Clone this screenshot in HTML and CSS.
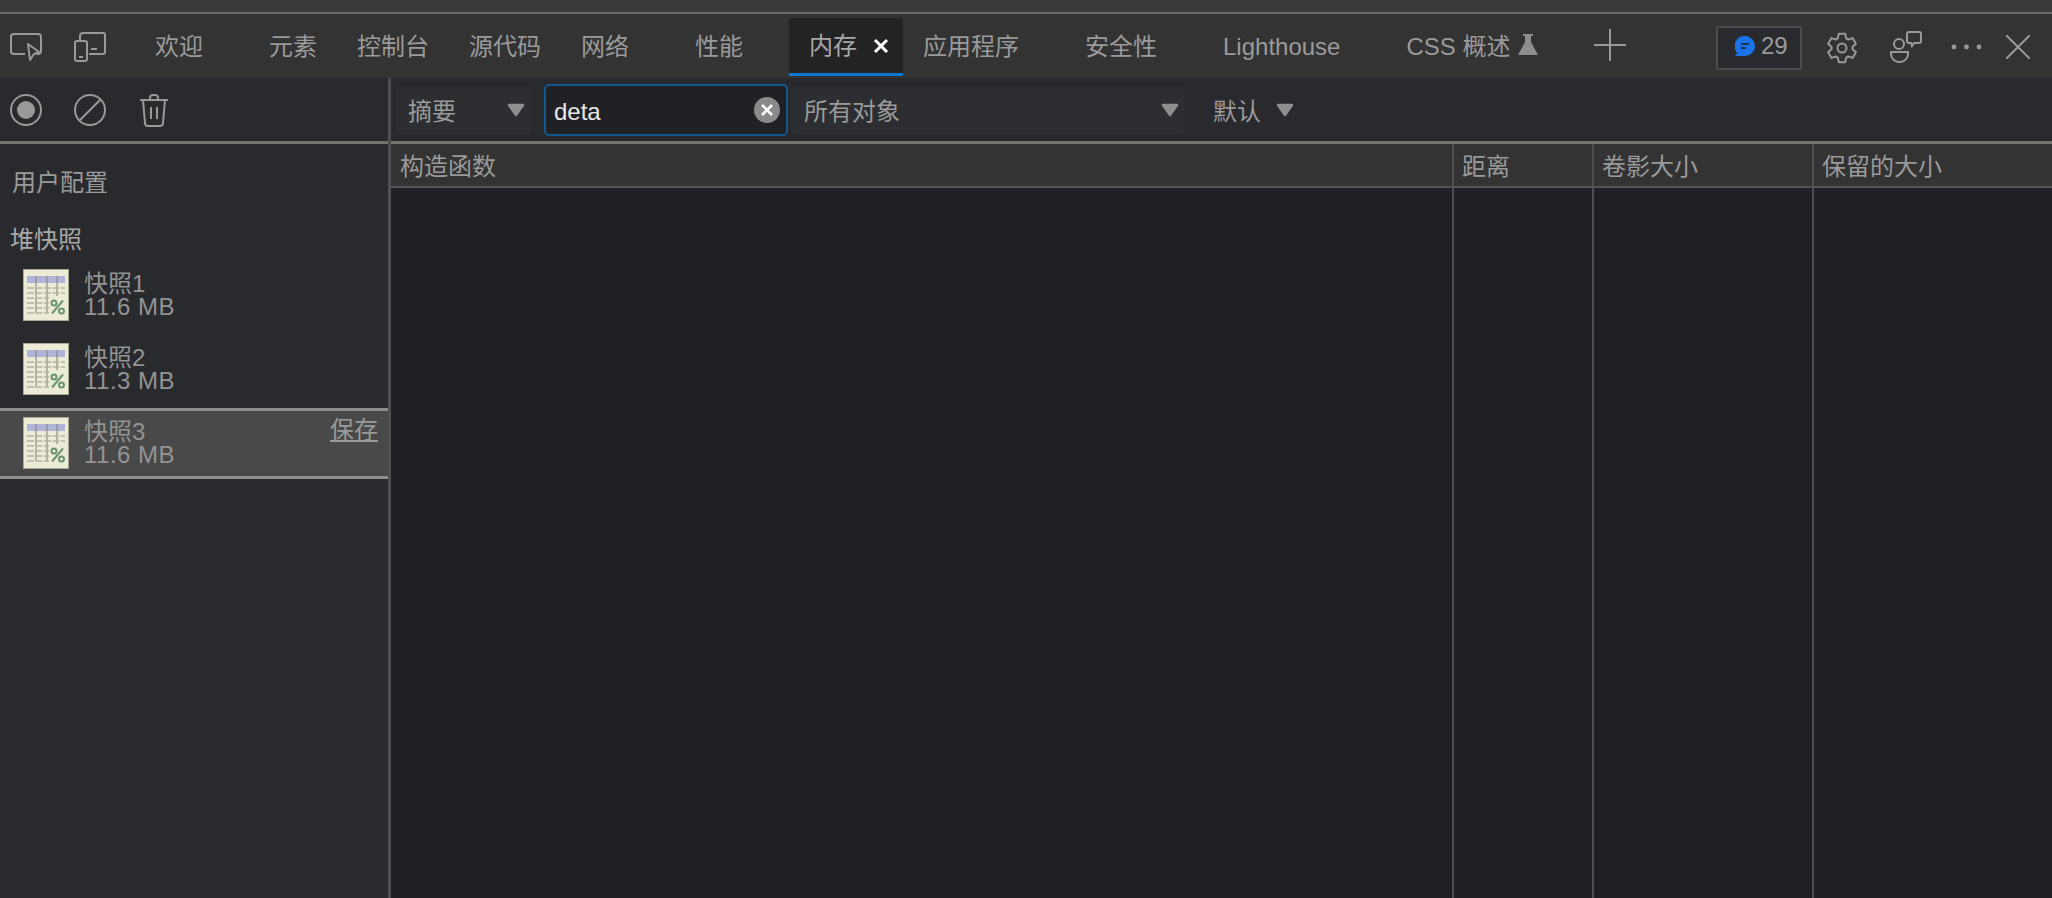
FILE: index.html
```html
<!DOCTYPE html>
<html lang="zh">
<head>
<meta charset="utf-8">
<title>内存</title>
<link rel="stylesheet" href="styles.css">
</head>
<body>
<svg class="defs" width="0" height="0" aria-hidden="true">
  <symbol id="sheet" viewBox="0 0 46 52">
    <rect x="0.5" y="0.5" width="45" height="51" fill="#ecebd6" stroke="#a9a996"/>
    <rect x="4" y="7" width="38" height="7" fill="#b0b4d8"/>
    <g stroke="#8f8f82" stroke-width="1.5" opacity=".6">
      <path d="M4 19h38M4 24h38M4 29h22M4 34h22M4 39h22M4 44h22" stroke-dasharray="7 1.5"/>
      <path d="M13 7v37M24 7v37M34 7v20" stroke-width="2"/>
    </g>
    <g fill="none" stroke="#6a9470" stroke-width="2">
      <path d="M40 31.500L29 44.500"/>
      <circle cx="31" cy="34" r="2.500"/>
      <circle cx="38.500" cy="42" r="2.500"/>
    </g>
  </symbol>
  <symbol id="tri" viewBox="0 0 18 14">
    <path d="M2 2h14L9 12z" fill="#8e8e8e" stroke="#8e8e8e" stroke-width="2.5" stroke-linejoin="round"/>
  </symbol>
</svg>
<div class="window-edge"></div>
<header class="tabbar">
  <button class="tool">
    <svg width="32" height="28" viewBox="0 0 32 28" fill="none" stroke="#999" stroke-width="2"><path d="M15 21H4a3 3 0 0 1-3-3V4a3 3 0 0 1 3-3h24a3 3 0 0 1 3 3v14a3 3 0 0 1-3 3h-2"/><path d="M18 11l11 8-5 2-4 6z" fill="#333" stroke-linejoin="round"/></svg>
  </button>
  <button class="tool">
    <svg width="32" height="30" viewBox="0 0 32 30" fill="none" stroke="#999" stroke-width="2"><path d="M6 8V4a3 3 0 0 1 3-3h20a2 2 0 0 1 2 2v17a2 2 0 0 1-2 2h-14"/><rect x="1" y="9" width="12" height="20" rx="2"/><path d="M5 25h4M17 17h6" stroke-width="2"/></svg>
  </button>
  <nav class="tabs">
    <span class="tab tab-roomy">欢迎</span>
    <span class="tab">元素</span>
    <span class="tab">控制台</span>
    <span class="tab">源代码</span>
    <span class="tab tab-roomy">网络</span>
    <span class="tab tab-roomy">性能</span>
    <span class="tab tab-active">内存<svg class="tab-close" width="16" height="16" viewBox="0 0 16 16" stroke="#fff" stroke-width="3"><path d="M2 2l12 12M14 2L2 14"/></svg></span>
    <span class="tab tab-roomy">应用程序</span>
    <span class="tab tab-roomy">安全性</span>
    <span class="tab tab-roomy">Lighthouse</span>
    <span class="tab tab-css">CSS 概述<svg class="flask" width="20" height="22" viewBox="0 0 20 22"><path d="M5 1h10v2h-2v6l6 11a1 1 0 0 1-1 2H2a1 1 0 0 1-1-2L7 9V3H5z" fill="#8e8e8e"/></svg></span>
    <svg class="plus" width="32" height="32" viewBox="0 0 32 32" stroke="#999" stroke-width="2"><path d="M0 16h32M16 0v32"/></svg>
  </nav>
  <div class="actions">
    <div class="badge">
      <svg width="20" height="20" viewBox="0 0 20 20"><path d="M10 0a10 10 0 0 1 0 20H0l2.4-3A10 10 0 0 1 10 0z" fill="#1a73e8"/><path d="M6 8h8M6 12h5" stroke="#202124" stroke-width="1.6"/></svg>
      <span>29</span>
    </div>
    <svg class="act-gear" width="32" height="32" viewBox="0 0 32 32" fill="none" stroke="#999" stroke-width="2" stroke-linejoin="round"><path d="M11.73 6.41L12.74 1.87H19.26L20.27 6.41L22.17 7.51L26.6 6.11L29.87 11.76L26.44 14.9V17.1L29.87 20.24L26.6 25.89L22.17 24.49L20.27 25.59L19.26 30.13H12.74L11.73 25.59L9.83 24.49L5.4 25.89L2.13 20.24L5.56 17.1V14.9L2.13 11.76L5.4 6.11L9.83 7.51Z"/><circle cx="16" cy="16" r="4.5"/></svg>
    <svg class="act-feedback" width="32" height="32" viewBox="0 0 32 32" fill="none" stroke="#999" stroke-width="2"><circle cx="9" cy="13" r="5"/><path d="M1 21h17v2a8 8 0 0 1-8 8H9a8 8 0 0 1-8-8z"/><path d="M19 1h10a2 2 0 0 1 2 2v7a2 2 0 0 1-2 2h-5l-2 3-1-3h-2a2 2 0 0 1-2-2V3a2 2 0 0 1 2-2z"/></svg>
    <svg class="act-dots" width="31" height="6" viewBox="0 0 31 6" fill="#999"><circle cx="3" cy="3" r="2.4"/><circle cx="15.5" cy="3" r="2.4"/><circle cx="28" cy="3" r="2.4"/></svg>
    <svg class="act-close" width="24" height="24" viewBox="0 0 24 24" stroke="#999" stroke-width="2"><path d="M0 0l24 24M24 0L0 24"/></svg>
  </div>
</header>
<div class="workspace">
  <aside class="sidebar">
    <div class="side-toolbar">
      <svg width="32" height="32" viewBox="0 0 32 32" fill="none" stroke="#999" stroke-width="2"><circle cx="16" cy="16" r="15"/><circle cx="16" cy="16" r="9" fill="#999" stroke="none"/></svg>
      <svg width="32" height="32" viewBox="0 0 32 32" fill="none" stroke="#999" stroke-width="2"><circle cx="16" cy="16" r="15"/><path d="M5.5 26.5l21-21"/></svg>
      <svg class="trash" width="28" height="33" viewBox="0 0 28 33" fill="none" stroke="#999" stroke-width="2"><path d="M0 6h28M10 6V4a3 3 0 0 1 3-3h2a3 3 0 0 1 3 3v2M3 6l2 23a3 3 0 0 0 3 3h12a3 3 0 0 0 3-3l2-23M11 13v12M17 13v12"/></svg>
    </div>
    <div class="side-title">用户配置</div>
    <div class="side-group">堆快照</div>
    <div class="snapshot">
      <svg class="sheet"><use href="#sheet"/></svg>
      <div class="snap-text"><div>快照1</div><div class="snap-size">11.6 MB</div></div>
    </div>
    <div class="snapshot">
      <svg class="sheet"><use href="#sheet"/></svg>
      <div class="snap-text"><div>快照2</div><div class="snap-size">11.3 MB</div></div>
    </div>
    <div class="snapshot snapshot-selected">
      <svg class="sheet"><use href="#sheet"/></svg>
      <div class="snap-text"><div>快照3</div><div class="snap-size">11.6 MB</div></div>
      <span class="snap-save">保存</span>
    </div>
  </aside>
  <main class="main">
    <div class="filters">
      <div class="select select-view"><span class="field-text">摘要</span><svg class="tri"><use href="#tri"/></svg></div>
      <div class="search"><span class="field-text">deta</span>
        <svg class="search-clear" width="26" height="26" viewBox="0 0 26 26"><circle cx="13" cy="13" r="13" fill="#8a8a8a"/><path d="M8 8l10 10M18 8L8 18" stroke="#fff" stroke-width="2.6"/></svg>
      </div>
      <div class="select select-objects"><span class="field-text">所有对象</span><svg class="tri"><use href="#tri"/></svg></div>
      <div class="select select-order"><span class="field-text">默认</span><svg class="tri"><use href="#tri"/></svg></div>
    </div>
    <div class="grid">
      <div class="grid-row grid-head">
        <div class="cell">构造函数</div>
        <div class="cell">距离</div>
        <div class="cell">卷影大小</div>
        <div class="cell">保留的大小</div>
      </div>
      <div class="grid-row grid-body">
        <div class="cell"></div>
        <div class="cell"></div>
        <div class="cell"></div>
        <div class="cell"></div>
      </div>
    </div>
  </main>
</div>
</body>
</html>
```

FILE: styles.css
```css
* { box-sizing: border-box; }
html, body { height: 100%; }
body {
  margin: 0;
  width: 2052px;
  height: 898px;
  overflow: hidden;
  display: flex;
  flex-direction: column;
  background: #292a2d;
  color: #9a9a9a;
  font-family: "Liberation Sans", "Noto Sans CJK SC", sans-serif;
  font-size: 24px;
  line-height: 28px;
}
.defs { position: absolute; }
svg { display: block; flex: none; }

.window-edge {
  height: 14px;
  flex: none;
  background: #3a3a3a;
  border-bottom: 2px solid #6c6c6c;
}

.tabbar {
  height: 64px;
  flex: none;
  display: flex;
  align-items: center;
  padding-left: 10px;
  background: #333333;
}
.tool {
  width: 32px;
  height: 30px;
  margin-right: 32px;
  padding: 0;
  border: 0;
  background: none;
  position: relative;
  top: 1px;
}
.tabs {
  display: flex;
  align-items: stretch;
  height: 100%;
  margin-left: -3px;
}
.tab {
  display: flex;
  align-items: center;
  padding: 2px 20px 0;
  white-space: nowrap;
}
.tab-roomy { padding-right: 46px; }
.tab-active {
  height: 58px;
  margin-top: 4px;
  padding: 0 14px 0 20px;
  background: #232323;
  border-bottom: 3px solid #0f78d0;
  border-radius: 3px 3px 0 0;
  color: #a8a8a8;
}
.tab-close { margin-left: 16px; }
.tab-css { padding-right: 0; }
.flask { margin-left: 8px; margin-top: -6px; }
.plus { margin: 15px 0 0 56px; }

.actions {
  margin-left: auto;
  display: flex;
  align-items: center;
  padding-right: 22px;
}
.badge {
  width: 86px;
  height: 44px;
  margin-top: 4px;
  display: flex;
  align-items: center;
  gap: 6px;
  padding: 0 0 4px 17px;
  background: #292a2d;
  border: 2px solid #4a4c50;
  border-radius: 3px;
}
.act-gear { margin: 4px 0 0 24px; }
.act-feedback { margin: 2px 0 0 32px; }
.act-dots { margin: 2px 0 0 29px; }
.act-close { margin: 2px 0 0 24px; }

.workspace { flex: 1; display: flex; min-height: 0; }

.sidebar {
  width: 391px;
  flex: none;
  border-right: 3px solid #4e4f52;
  background: #292a2d;
}
.side-toolbar {
  height: 66px;
  display: flex;
  align-items: center;
  gap: 32px;
  padding: 1px 0 0 10px;
  border-bottom: 3px solid #737373;
}
.side-toolbar .trash { margin-left: 2px; }
.side-title { padding: 25px 0 0 12px; height: 65px; }
.side-group { padding: 17px 0 0 10px; height: 49px; color: #a8a8a8; }
.snapshot {
  height: 74px;
  display: flex;
  align-items: center;
  padding-left: 23px;
  position: relative;
}
.sheet { width: 46px; height: 52px; filter: blur(.6px); }
.snap-text { margin-left: 15px; line-height: 23px; color: #939393; }
.snap-size { letter-spacing: .5px; }
.snapshot-selected {
  height: 71px;
  margin-top: 2px;
  padding-bottom: 2px;
  background: #494949;
  border-top: 3px solid #8e8e8e;
  border-bottom: 3px solid #8e8e8e;
}
.snap-save {
  position: absolute;
  right: 10px;
  top: 5px;
  text-decoration: underline;
}

.main { flex: 1; display: flex; flex-direction: column; min-width: 0; }
.filters {
  height: 66px;
  flex: none;
  display: flex;
  align-items: center;
  padding: 1px 0 0 5px;
  border-bottom: 3px solid #737373;
  background: #292a2d;
}
.field-text { padding-top: 3px; }
.select {
  height: 47px;
  display: flex;
  align-items: center;
  justify-content: space-between;
  background: #2d2e31;
  border-radius: 2px;
}
.tri { width: 18px; height: 14px; }
.select-view { width: 135px; padding: 0 6px 0 12px; }
.search {
  width: 244px;
  height: 52px;
  margin-left: 13px;
  display: flex;
  align-items: center;
  justify-content: space-between;
  padding: 0 6px 0 8px;
  color: #e8e8e8;
  background: #202124;
  border: 2px solid #12588e;
  border-radius: 5px;
}
.select-objects { width: 393px; margin-left: 3px; padding: 0 5px 0 13px; }
.select-order {
  margin-left: 29px;
  gap: 15px;
  background: none;
}

.grid { flex: 1; display: flex; flex-direction: column; min-height: 0; }
.grid-row {
  display: grid;
  grid-template-columns: 1061px 140px 220px 1fr;
}
.grid-head {
  height: 44px;
  flex: none;
  background: #333333;
  border-bottom: 2px solid #55565a;
}
.grid-body { flex: 1; background: #202124; }
.cell {
  padding: 9px 0 0 8px;
  border-left: 2px solid #4e4f52;
}
.cell:first-child { border-left: 0; padding-left: 9px; }
```
